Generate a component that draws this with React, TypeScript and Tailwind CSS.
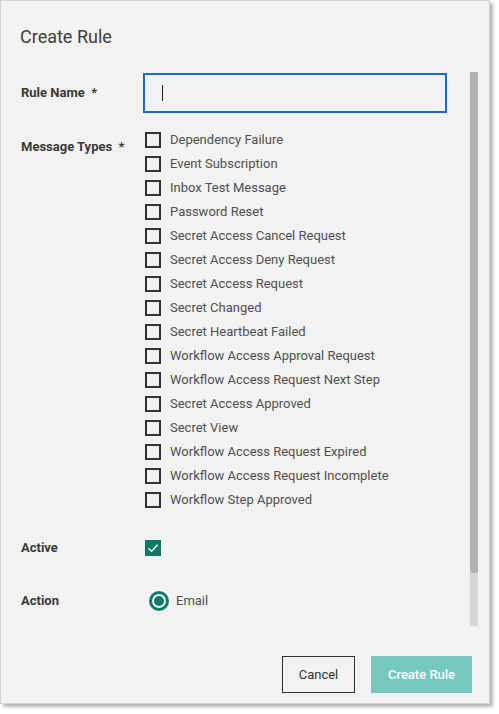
import React from "react";

const types = [
  "Dependency Failure",
  "Event Subscription",
  "Inbox Test Message",
  "Password Reset",
  "Secret Access Cancel Request",
  "Secret Access Deny Request",
  "Secret Access Request",
  "Secret Changed",
  "Secret Heartbeat Failed",
  "Workflow Access Approval Request",
  "Workflow Access Request Next Step",
  "Secret Access Approved",
  "Secret View",
  "Workflow Access Request Expired",
  "Workflow Access Request Incomplete",
  "Workflow Step Approved",
];

export default function App() {
  return (
    <div className="w-[499px] h-[714px] bg-white font-['Roboto',sans-serif]">
      <div className="w-[490px] h-[704px] bg-[#f2f2f2] border border-[#d2d2d2] shadow-[3px_3px_3px_rgba(0,0,0,0.28)] flex flex-col">
        <div className="pt-[24px] pl-[19px] h-[71px]">
          <h1 className="text-[18px] leading-[24px] text-[#404040] font-normal">Create Rule</h1>
        </div>
        <div className="flex h-[554px]">
          <div className="flex-1 pl-[20px]">
            <div className="flex items-center h-[40px] mt-[1px]">
              <div className="w-[122px] text-[13px] font-bold text-[#3a3a3a]">Rule Name&nbsp; *</div>
              <div className="w-[304px] h-[40px] border-2 border-[#1a6bc8] flex items-center pl-[17px]">
                <div className="w-[1px] h-[16px] bg-[#222]" />
              </div>
            </div>
            <div className="flex mt-[15px]">
              <div className="w-[124px] pt-[7px] text-[13px] leading-[24px] font-bold text-[#3a3a3a]">Message Types&nbsp; *</div>
              <div className="flex flex-col">
                {types.map((t) => (
                  <div key={t} className="flex items-center h-[24px]">
                    <div className="w-[16px] h-[16px] border-2 border-[#333] box-border" />
                    <span className="ml-[9px] text-[13px] text-[#505050]">{t}</span>
                  </div>
                ))}
              </div>
            </div>
            <div className="flex items-center h-[24px] mt-[24px]">
              <div className="w-[124px] text-[13px] font-bold text-[#3a3a3a]">Active</div>
              <div className="w-[16px] h-[16px] bg-[#0d7a69] flex items-center justify-center">
                <svg width="14" height="14" viewBox="0 0 14 14" fill="none">
                  <path d="M2.5 7.2 L5.6 10.2 L11.6 3.8" stroke="white" strokeWidth="1.3" />
                </svg>
              </div>
            </div>
            <div className="flex items-center h-[24px] mt-[29px]">
              <div className="w-[128px] text-[13px] font-bold text-[#3a3a3a]">Action</div>
              <div className="w-[20px] h-[20px] rounded-full border-[3px] border-[#0d7a69] flex items-center justify-center">
                <div className="w-[10px] h-[10px] rounded-full bg-[#0d7a69]" />
              </div>
              <span className="ml-[7px] text-[13px] text-[#505050]">Email</span>
            </div>
          </div>
          <div className="w-[8px] mr-[11px] bg-[#d6d6d6] flex flex-col">
            <div className="h-[501px] bg-[#b3b3b3] rounded-b-[3px]" />
          </div>
        </div>
        <div className="flex justify-end gap-[16px] pr-[17px] mt-[30px]">
          <button className="w-[73px] h-[37px] border border-[#333] text-[13px] text-[#333] bg-[#f2f2f2]">Cancel</button>
          <button className="w-[101px] h-[37px] bg-[#75c8bd] text-[13px] font-medium text-white">Create Rule</button>
        </div>
      </div>
    </div>
  );
}
